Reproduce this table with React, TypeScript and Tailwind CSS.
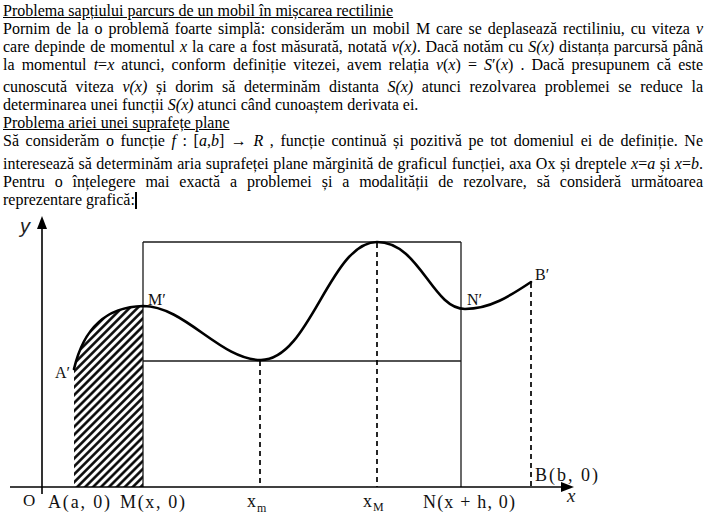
import React from "react";

const J = "text-justify [text-align-last:justify]";

function Graph() {
  const curve =
    "M74,369 C82,335 100,307 143,306 C185,306 220,360 261,360 C310,360 330,242 377,242 C420,242 432,309 465,309 C490,309 510,296 531,282";
  const hatch = "M74,487 L74,369 C82,335 100,307 143,306 L143,487 Z";
  const serif = "'Liberation Serif', 'Times New Roman', serif";
  return (
    <svg
      width="712"
      height="307"
      viewBox="0 208 712 307"
      className="block"
      fontFamily={serif}
    >
      <defs>
        <pattern
          id="hatch"
          patternUnits="userSpaceOnUse"
          width="5.6"
          height="5.6"
          patternTransform="rotate(45)"
        >
          <line x1="1.4" y1="-1" x2="1.4" y2="7" stroke="#000" strokeWidth="2.5" />
        </pattern>
      </defs>

      {/* hatched area */}
      <path d={hatch} fill="url(#hatch)" />

      {/* rectangles */}
      <g stroke="#1a1a1a" strokeWidth="1.3" fill="none">
        <line x1="143" y1="242" x2="461" y2="242" />
        <line x1="143" y1="361" x2="461" y2="361" />
        <line x1="143" y1="242" x2="143" y2="487" />
        <line x1="461" y1="242" x2="461" y2="487" />
      </g>

      {/* dashed lines */}
      <g stroke="#000" strokeWidth="1.7" strokeDasharray="5 4" fill="none">
        <line x1="260" y1="361" x2="260" y2="487" />
        <line x1="377" y1="243" x2="377" y2="487" />
        <line x1="531" y1="283" x2="531" y2="487" />
      </g>

      {/* axes */}
      <g stroke="#000" strokeWidth="1.6" fill="none">
        <line x1="42" y1="494" x2="42" y2="226" />
        <line x1="10" y1="487" x2="564" y2="487" />
      </g>
      <polygon points="42,216 37,229 47,229" fill="#000" />
      <polygon points="574,487 561,482 561,492" fill="#000" />

      {/* curve */}
      <path d={curve} fill="none" stroke="#000" strokeWidth="2.6" strokeLinecap="round" />

      {/* labels */}
      <text x="20" y="233" fontSize="20" fontStyle="italic" fontFamily="'Liberation Sans', Arial, sans-serif" fill="#222">
        y
      </text>
      <text x="148" y="305" fontSize="16" fill="#111">M′</text>
      <text x="467" y="305" fontSize="16" fill="#111">N′</text>
      <text x="55" y="378" fontSize="16" fill="#111">A′</text>
      <text x="535" y="280" fontSize="16" fill="#111">B′</text>

      <text x="23" y="506" fontSize="17" fill="#111">O</text>
      <text x="48" y="508" fontSize="18" fill="#111" textLength="62" lengthAdjust="spacing">A(a, 0)</text>
      <text x="120" y="508" fontSize="18" fill="#111" textLength="65" lengthAdjust="spacing">M(x, 0)</text>
      <text x="247" y="507" fontSize="18" fill="#111">x</text>
      <text x="257" y="512" fontSize="12" fill="#111">m</text>
      <text x="363" y="507" fontSize="18" fill="#111">x</text>
      <text x="373" y="511" fontSize="12" fill="#111">M</text>
      <text x="423" y="508" fontSize="18" fill="#111" textLength="92" lengthAdjust="spacing">N(x + h, 0)</text>
      <text x="535" y="481" fontSize="18" fill="#111" textLength="63" lengthAdjust="spacing">B(b, 0)</text>
      <text x="567" y="502" fontSize="19" fontStyle="italic" fill="#222">x</text>
    </svg>
  );
}

export default function App() {
  return (
    <div className="w-[712px] h-[515px] bg-white overflow-hidden text-black font-['Liberation_Serif','Times_New_Roman',serif]">
      <div className="h-[208px] pt-[2px] pl-[3px] w-[703px] text-[16px] leading-[18px]">
        <div className="underline">Problema sapțiului parcurs de un mobil în mișcarea rectilinie</div>
        <div className={J}>
          Pornim de la o problemă foarte simplă: considerăm un mobil M care se deplasează rectiliniu, cu viteza <i>v</i>
        </div>
        <div className={J}>
          care depinde de momentul <i>x</i> la care a fost măsurată, notată <i>v(x)</i>. Dacă notăm cu <i>S(x)</i> distanța parcursă până
        </div>
        <div className={`${J} mb-[4px]`}>
          la momentul <i>t</i>=<i>x</i> atunci, conform definiție vitezei, avem relația{"  "}
          <span>
            <i>v</i>(<i>x</i>) = <i>S</i>′(<i>x</i>)
          </span>{"  "}. Dacă presupunem că este
        </div>
        <div className={J}>
          cunoscută viteza <i>v(x)</i> și dorim să determinăm distanta <i>S(x)</i> atunci rezolvarea problemei se reduce la
        </div>
        <div>
          determinarea unei funcții <i>S(x)</i> atunci când cunoaștem derivata ei.
        </div>
        <div className="underline">Problema ariei unei suprafețe plane</div>
        <div className={`${J} mb-[5px]`}>
          Să considerăm o funcție{" "}
          <span>
            <i>f</i> : [<i>a</i>,<i>b</i>] → <i>R</i>
          </span>{" "}
          , funcție continuă și pozitivă pe tot domeniul ei de definiție. Ne
        </div>
        <div className={J}>
          interesează să determinăm aria suprafeței plane mărginită de graficul funcției, axa Ox și dreptele <i>x</i>=<i>a</i> și <i>x</i>=<i>b</i>.
        </div>
        <div className={J}>
          Pentru o înțelegere mai exactă a problemei și a modalității de rezolvare, să consideră următoarea
        </div>
        <div className="flex items-center">
          <span>reprezentare grafică:</span>
          <span className="inline-block w-[2px] h-[17px] bg-black"></span>
        </div>
      </div>
      <Graph />
    </div>
  );
}
